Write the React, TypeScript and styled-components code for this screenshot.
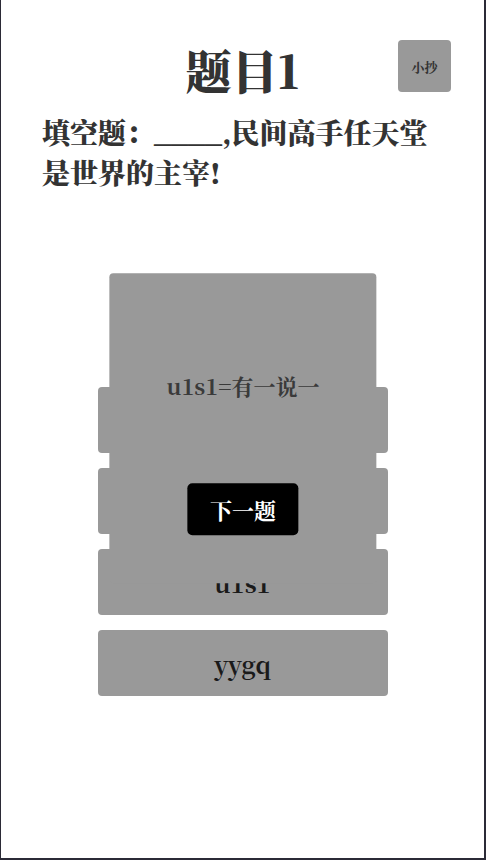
import React from 'react';
import styled, { createGlobalStyle } from 'styled-components';

const GlobalStyle = createGlobalStyle`
  html, body {
    margin: 0;
    padding: 0;
    background: #fff;
  }
  body {
    font-family: "Noto Serif CJK SC", "Liberation Serif", "Noto Sans CJK SC", serif;
  }
  * {
    box-sizing: border-box;
  }
`;

const Frame = styled.div`
  min-height: 100vh;
  border-left: 1px solid #2b2a36;
  border-right: 2px solid #2b2a36;
  border-bottom: 2px solid #2b2a36;
  padding-top: 40px;
`;

const Header = styled.div`
  display: grid;
  grid-template-columns: 1fr auto 1fr;
  align-items: start;
`;

const Title = styled.h1`
  grid-column: 2;
  margin: 0;
  font-size: 46px;
  line-height: 58px;
  font-weight: 900;
  color: #333;
`;

const CheatButton = styled.button`
  grid-column: 3;
  justify-self: end;
  margin-right: 33px;
  width: 53px;
  height: 52px;
  border: none;
  border-radius: 4px;
  background: #999;
  color: #333;
  font-family: inherit;
  font-size: 13px;
  font-weight: 700;
  cursor: pointer;
`;

const Question = styled.p`
  margin: 14px 0 0;
  padding: 0 41px;
  font-size: 28px;
  line-height: 40px;
  font-weight: 900;
  color: #333;
`;

const Options = styled.div`
  display: flex;
  flex-direction: column;
  gap: 15px;
  width: 290px;
  margin: 195px auto 0;
`;

const Option = styled.div`
  height: 66px;
  display: flex;
  align-items: center;
  justify-content: center;
  border-radius: 4px;
  background: #999;
  color: #1a1a1a;
  font-size: 24px;
  font-weight: 700;
  cursor: pointer;
`;

const Popup = styled.div`
  position: fixed;
  left: 50%;
  top: calc(50% - 2px);
  transform: translate(-50%, -50%);
  width: 55vw;
  height: 36vh;
  display: flex;
  flex-direction: column;
  align-items: center;
  padding-top: 97px;
  gap: 81px;
  border-radius: 4px;
  background: #999;
`;

const Explain = styled.div`
  font-size: 22px;
  line-height: 32px;
  font-weight: 700;
  color: #3a3a3a;
`;

const NextButton = styled.button`
  width: 111px;
  height: 52px;
  border: none;
  border-radius: 5px;
  background: #000;
  color: #fff;
  font-family: inherit;
  font-size: 22px;
  font-weight: 700;
  cursor: pointer;
`;

const options = ['u1s1', 'nsdd', 'u1s1', 'yygq'];

export default function App() {
  return (
    <>
      <GlobalStyle />
      <Frame>
        <Header>
          <Title>题目1</Title>
          <CheatButton>小抄</CheatButton>
        </Header>
        <Question>填空题：____,民间高手任天堂是世界的主宰!</Question>
        <Options>
          {options.map((o, i) => (
            <Option key={i}>{o}</Option>
          ))}
        </Options>
      </Frame>
      <Popup>
        <Explain>u1s1=有一说一</Explain>
        <NextButton>下一题</NextButton>
      </Popup>
    </>
  );
}
